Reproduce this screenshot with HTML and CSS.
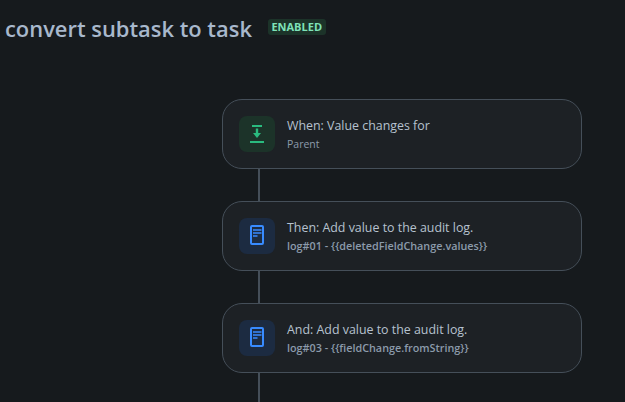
FILE: index.html
```html
<!DOCTYPE html>
<html lang="en">
<head>
<meta charset="utf-8">
<title>convert subtask to task</title>
<link rel="stylesheet" href="styles.css">
</head>
<body>
<header class="header">
  <h1 class="title">convert subtask to task</h1>
  <span class="badge">ENABLED</span>
</header>
<main class="flow">
  <section class="card">
    <div class="tile tile-green">
      <svg width="18" height="20" viewBox="0 0 18 20"><path d="M4 2h10M2 18h14" stroke="#2abb7f" stroke-width="2" fill="none"/><path d="M9 4.5v5" stroke="#2abb7f" stroke-width="2.4"/><path d="M5 9h8l-4 5z" fill="#2abb7f"/></svg>
    </div>
    <div class="text">
      <div class="name">When: Value changes for</div>
      <div class="sub">Parent</div>
    </div>
  </section>
  <div class="link"></div>
  <section class="card">
    <div class="tile tile-blue">
      <svg width="16" height="22" viewBox="0 0 16 22"><rect x="2" y="1" width="12" height="18" rx="1" stroke="#388bff" stroke-width="2" fill="none"/><path d="M4 5h8.5M4 8h8.5M4 11h4.5" stroke="#388bff" stroke-width="1.5"/></svg>
    </div>
    <div class="text">
      <div class="name">Then: Add value to the audit log.</div>
      <div class="sub sub-strong">log#01 - {{deletedFieldChange.values}}</div>
    </div>
  </section>
  <div class="link"></div>
  <section class="card">
    <div class="tile tile-blue">
      <svg width="16" height="22" viewBox="0 0 16 22"><rect x="2" y="1" width="12" height="18" rx="1" stroke="#388bff" stroke-width="2" fill="none"/><path d="M4 5h8.5M4 8h8.5M4 11h4.5" stroke="#388bff" stroke-width="1.5"/></svg>
    </div>
    <div class="text">
      <div class="name">And: Add value to the audit log.</div>
      <div class="sub sub-strong">log#03 - {{fieldChange.fromString}}</div>
    </div>
  </section>
  <div class="link"></div>
</main>
</body>
</html>
```
FILE: styles.css
```css
html, body {
  margin: 0;
  height: 100%;
  overflow: hidden;
  background: #161a1d;
}
body {
  font-family: "Open Sans", "Noto Sans", sans-serif;
  color: #b6c2cf;
}
.header {
  display: flex;
  align-items: flex-start;
  gap: 16px;
  height: 20px;
  padding: 19px 0 0 5px;
}
.title {
  margin: 0;
  font-size: 21.9px;
  font-weight: 600;
  line-height: 20px;
  color: #a8b8cc;
}
.badge {
  padding: 0 3.5px;
  font-size: 11px;
  font-weight: 700;
  line-height: 16px;
  color: #7ee2b8;
  background: #1c3329;
  border-radius: 3px;
}
.flow {
  display: flex;
  flex-direction: column;
  margin: 60px 0 0 222px;
  width: 360px;
}
.card {
  box-sizing: border-box;
  display: flex;
  align-items: center;
  gap: 12px;
  height: 70px;
  padding: 0 16px;
  background: #1d2125;
  border: 1px solid #454f59;
  border-radius: 20px;
}
.tile {
  flex: none;
  display: flex;
  align-items: center;
  justify-content: center;
  width: 36px;
  height: 36px;
  border-radius: 8px;
}
.tile-green { background: #1c3329; }
.tile-blue { background: #1c2b41; }
.text {
  display: flex;
  flex-direction: column;
  gap: 2px;
}
.name {
  font-size: 12.4px;
  line-height: 18px;
  color: #b6c2cf;
}
.sub {
  font-size: 10.5px;
  line-height: 14px;
  color: #8c9bab;
}
.sub-strong {
  font-size: 10.8px;
  font-weight: 600;
}
.link {
  width: 2px;
  height: 32px;
  margin-left: 36px;
  background: #454f59;
}
```
